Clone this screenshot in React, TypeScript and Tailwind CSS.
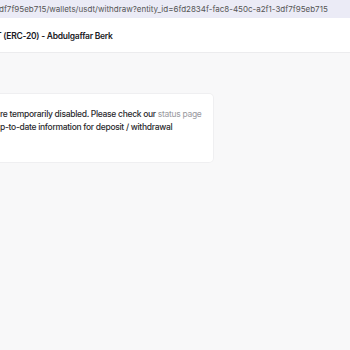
export default function App() {
  return (
    <div className="w-[350px] h-[350px] overflow-hidden bg-[#f8f8f9] font-['Inter',sans-serif]">
      {/* address bar */}
      <div className="h-[18px] bg-[#ebebf6] flex items-center overflow-hidden whitespace-nowrap">
        <span className="text-[8px] text-[#555] ml-[-1px]">
          df7f95eb715/wallets/usdt/withdraw?entity_id=6fd2834f-fac8-450c-a2f1-3df7f95eb715
        </span>
      </div>

      {/* page header */}
      <div className="h-[35px] bg-white border-b border-[#ececee] flex items-center pt-[3px] overflow-hidden whitespace-nowrap">
        <h1 className="text-[8.5px] font-semibold tracking-[-0.25px] text-[#1b1b1f] ml-[-4px]">
          T (ERC-20) - Abdulgaffar Berk
        </h1>
      </div>

      {/* notice card */}
      <div className="mt-[40px] w-[214px] h-[70px] bg-white border border-l-0 border-[#efeff1] rounded-r-[5px] overflow-hidden">
        <p className="mt-[14px] text-[8.5px] font-medium tracking-[-0.3px] leading-[13px] text-[#2a2a2e] whitespace-nowrap">
          re temporarily disabled. Please check our{' '}
          <span className="font-normal text-[#9a9aa0]">status page</span>
          <br />
          p-to-date information for deposit / withdrawal
        </p>
      </div>
    </div>
  );
}
